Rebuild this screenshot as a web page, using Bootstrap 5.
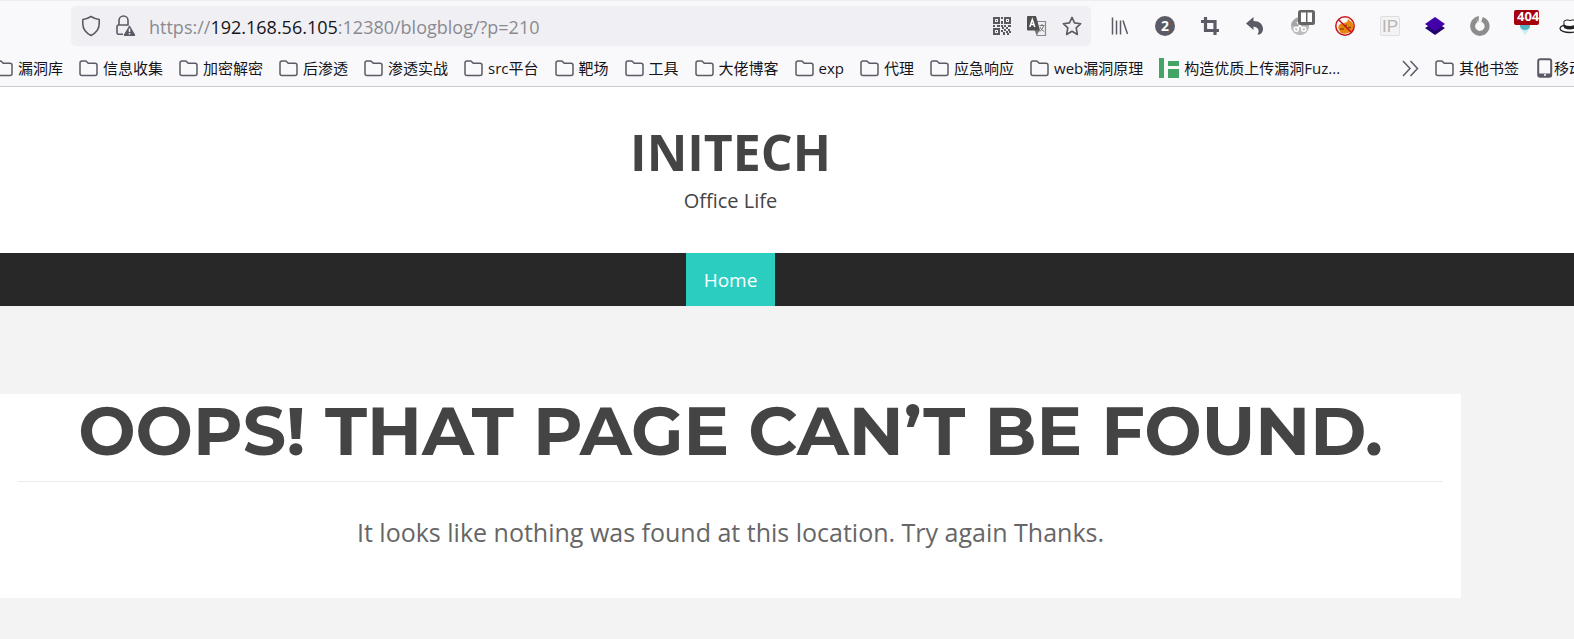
<!DOCTYPE html>
<html lang="zh-CN">
<head>
<meta charset="utf-8">
<meta name="viewport" content="width=device-width, initial-scale=1">
<title>Initech – Page not found</title>
<link href="https://cdn.jsdelivr.net/npm/bootstrap@5.3.0/dist/css/bootstrap.min.css" rel="stylesheet">
<style>
  body { background: #f3f3f3; font-family: "Open Sans", "Noto Sans CJK SC", sans-serif; color: #444; overflow-x: hidden; }
  .chrome { background: #f9f9fb; border-top: 1px solid #eeeef0; border-bottom: 1px solid #ccc; color: #15141a; overflow: hidden; }
  .chrome svg { display: block; flex: none; }
  .chrome button { background: none; border: 0; padding: 0; color: inherit; }
  .toolbar { padding: 5px 0 0 71px; }
  .urlbar { height: 40px; background: #f0f0f4; border-radius: 5px; padding: 0 9px; color: #5b5b66; }
  .url-text { font-size: 18px; line-height: 24px; padding: 1px 0 0 3px; color: #8a8a90; outline: 0; white-space: nowrap; }
  .url-host { color: #15141a; }
  .url-actions { gap: 15px; }
  .extensions { width: 483px; padding-left: 6px; color: #5b5b66; }
  .extensions button { width: 45px; height: 40px; flex: none; display: flex; align-items: center; justify-content: center; }
  .ext-badge { top: 4px; left: 12px; width: 25px; height: 15px; background: #a4000f; color: #fff; border-radius: 2px; font: bold 13px/13px "Open Sans", sans-serif; padding-left: 3px; text-align: left; overflow: hidden; }
  .pane-badge { top: 4px; left: 21px; }
  .bookmarks { height: 40px; padding-top: 4px; font-size: 15px; line-height: 20px; white-space: nowrap; }
  .bookmark-list { gap: 16px; margin-left: -6px; }
  .bookmarks button { display: flex; align-items: center; gap: 5px; flex: none; }
  .bookmarks-end { width: 172px; flex: none; }
  .site-column { margin-right: 113px; }
  .masthead { padding: 31px 0 37px; }
  .site-title { font-size: 50px; line-height: 68px; font-weight: 700; }
  .site-tagline { font-size: 20px; line-height: 30px; }
  .site-nav { background: #282828; }
  .site-nav a { background: #2bcdc1; color: #fff; font-size: 19px; line-height: 51px; padding: 2px 18px 0; }
  .not-found { margin-top: 88px; padding: 0 18px 46px; }
  .not-found h1 { font: 700 68px/73px Montserrat, "DejaVu Sans", sans-serif; padding-bottom: 14px; border-bottom: 1px solid #ebebeb; }
  .not-found p { font-size: 25px; line-height: 40px; color: #666; padding-top: 30px; }
</style>
</head>
<body>
<svg width="0" height="0" class="position-absolute" aria-hidden="true">
  <symbol id="folder" viewBox="0 0 19 17"><path d="M1 13.5V3q0-2 2-2h3.2q1 0 1.6.8L9.200 3.300H16q2 0 2 2v8.200q0 2-2 2H3q-2 0-2-2z" fill="none" stroke="#5b5b66" stroke-width="1.500"/></symbol>
</svg>

<header class="chrome">
  <div class="toolbar d-flex">
    <div class="urlbar d-flex align-items-center flex-grow-1">
      <button type="button" aria-label="Tracking protection"><svg width="22" height="22" viewBox="0 0 22 22" fill="none" stroke="currentColor" stroke-width="1.600" stroke-linejoin="round"><path d="M11 1.500 Q15 4 19.200 4.500 V9 Q19 16.500 11 20.500 Q3 16.500 2.800 9 V4.500 Q7 4 11 1.500z"/></svg></button>
      <button type="button" class="ms-2 ps-1" aria-label="Connection not secure"><svg width="24" height="22" viewBox="0 0 24 22"><path d="M9 19.200H4.500q-1.500 0-1.500-1.500V11.500q0-1.500 1.500-1.500h9.500V5.500a4.500 4.500 0 0 0-9 0V10" fill="none" stroke="currentColor" stroke-width="1.600"/><path d="M15.500 11.500L20.500 20.200H10.500z" fill="currentColor" stroke="currentColor" stroke-width="1.500" stroke-linejoin="round"/><path d="M15.500 13.500v3.500M15.500 18v1.500" stroke="#f0f0f4" stroke-width="1.500"/></svg></button>
      <div class="url-text flex-grow-1 ms-2" role="textbox" contenteditable="true" spellcheck="false" aria-label="Address">https://<span class="url-host">192.168.56.105</span>:12380/blogblog/?p=210</div>
      <div class="url-actions d-flex align-items-center flex-shrink-0">
        <button type="button" aria-label="QR code"><svg width="20" height="20" viewBox="0 0 20 20" fill="#5a5a5e"><path fill-rule="evenodd" d="M1 1h7v7H1zM3 3v3h3V3zM12 1h7v7h-7zM14 3v3h3V3zM1 12h7v7H1zM3 14v3h3v-3z"/><path d="M4 4h1v1H4zM15 4h1v1h-1zM4 15h1v1H4zM9 1h2v2H9zM9 5h2v3H9zM1 9h2v2H1zM5 9h3v2H5zM9 9h2v2H9zM12 9h2v2h-2zM16 9h3v2h-3zM10 11h2v2h-2zM14 11h2v2h-2zM12 13h2v2h-2zM16 13h2v2h-2zM9 14h2v2H9zM14 15h2v2h-2zM17 15h2v2h-2zM11 16h2v3h-2zM15 17h2v2h-2z"/></svg></button>
        <button type="button" aria-label="Translate"><svg width="20" height="20" viewBox="0 0 20 20"><path d="M9 5.500h9.500v14H10z" fill="#f0f0f4" stroke="#888" stroke-width="1.200"/><path d="M12.500 9.500h5M15 8v1.500M16.700 9.500q-.8 4-4 6M13 11q1.500 3.500 4.300 4.500" fill="none" stroke="#777"/><path d="M1 0h8l4 14.500H1q-1 0-1-1V1q0-1 1-1z" fill="#505050"/><path d="M7.500 14h5.500L9.500 19z" fill="#707070"/><path d="M2.800 11L5.300 3.500l2.500 7.500M3.700 8.500h3.200" fill="none" stroke="#fff" stroke-width="1.500"/></svg></button>
        <button type="button" aria-label="Bookmark this page"><svg width="20" height="20" viewBox="0 0 20 20"><path d="M10 1.400l2.500 5.500 6.200.8-4.500 4.200 1.200 6.600L10 15.300l-5.400 3.200 1.200-6.600L1.300 7.700l6.200-.8z" fill="none" stroke="#5b5b66" stroke-width="1.600" stroke-linejoin="round"/></svg></button>
      </div>
    </div>
    <div class="extensions d-flex flex-shrink-0">
      <button type="button" aria-label="Library"><svg width="20" height="20" viewBox="0 0 20 20"><path d="M2.500 1.500v17M6.500 4.500v14M10.500 4.500v14M13 4.500l4.500 13.500" fill="none" stroke="currentColor" stroke-width="1.500"/></svg></button>
      <button type="button"><svg width="20" height="20" viewBox="0 0 20 20" role="img" aria-label="2 containers"><circle cx="10" cy="10" r="10" fill="currentColor"/><text x="10" y="15" text-anchor="middle" font-family="Open Sans" font-size="14" font-weight="700" fill="#fff">2</text></svg></button>
      <button type="button" aria-label="Screenshot"><svg width="20" height="20" viewBox="0 0 20 20"><path d="M1 5.500h14V19M5.500 1v13.500H19" fill="none" stroke="currentColor" stroke-width="3.200"/></svg></button>
      <button type="button" aria-label="Undo"><svg width="20" height="20" viewBox="0 0 20 20"><path d="M1 7.500L8.500 1v4C14.500 5 18 8.500 18 13q0 3.500-3.500 5.500h-2Q16 12 8.500 10.500V14z" fill="currentColor"/></svg></button>
      <button type="button" class="position-relative" aria-label="User scripts"><svg width="20" height="20" viewBox="0 0 20 20"><circle cx="10" cy="10" r="9" fill="#a6a6a6"/><path d="M1 10h18a9 9 0 0 1-18 0z" fill="#bdbdbd"/><path d="M7 6l6 7M13 6l-6 7" stroke="#fff" stroke-width="1.500"/><circle cx="6.300" cy="13.300" r="2" fill="none" stroke="#fff" stroke-width="1.500"/><circle cx="13.700" cy="13.300" r="2" fill="none" stroke="#fff" stroke-width="1.500"/></svg><svg class="pane-badge position-absolute" width="17" height="15" viewBox="0 0 17 15"><rect width="17" height="15" rx="2.500" fill="#666"/><path d="M3 2.500h5v9.500H3zM9.500 2.500h4.500v9.500H9.500z" fill="#fff"/></svg></button>
      <button type="button" aria-label="Proxy disabled"><svg width="20" height="20" viewBox="0 0 20 20"><path d="M4 14q-2-3 1-6 4-1 7-2l1-3 2 2 2 1q3 5 0 9-6 4-11 2z" fill="#e8850c"/><path d="M5 13h4M9 10l3-1M13 12l3-1" stroke="#5c3209"/><circle cx="10" cy="10" r="9.200" fill="none" stroke="#c8141e" stroke-width="1.500"/><path d="M3.500 3.500l13 13" stroke="#c8141e" stroke-width="1.500"/></svg></button>
      <button type="button"><svg width="20" height="20" viewBox="0 0 20 20" role="img" aria-label="IP lookup"><rect x=".5" y=".5" width="19" height="19" rx="1.500" fill="#f3f3f3" stroke="#dedede"/><text x="10" y="16" text-anchor="middle" font-family="Liberation Sans" font-size="17" fill="#b5b5b5">IP</text></svg></button>
      <button type="button" aria-label="Layers"><svg width="20" height="20" viewBox="0 0 20 20"><path d="M0 12l10-6 10 6-10 7z" fill="#22006e"/><path d="M0 8l10-7 10 7-10 7z" fill="#4400a8"/></svg></button>
      <button type="button" aria-label="Reload status"><svg width="20" height="20" viewBox="0 0 20 20"><path d="M12 3.300A7.200 7.200 0 1 1 6.500 3.800" fill="none" stroke="#8d8d8d" stroke-width="5"/><path d="M4.500 1.500l4.500-1.500-.5 6z" fill="#8d8d8d"/></svg></button>
      <button type="button" class="position-relative"><svg width="20" height="20" viewBox="0 0 20 20" aria-hidden="true"><path d="M4 11h12l-6 8z" fill="#c9eef3"/><path d="M5 7h10v3a5 4 0 0 1-10 0z" fill="#55b3c2"/></svg><span class="ext-badge position-absolute">404</span></button>
      <button type="button" aria-label="Hat"><svg width="22" height="20" viewBox="0 0 22 20"><ellipse cx="11" cy="12.500" rx="10" ry="4" fill="#fff" stroke="#222" stroke-width="1.300"/><path d="M5 11V5q3-2 6-.5 3-1.500 6 .5v6q-6 3-12 0z" fill="#fff" stroke="#222"/><path d="M5 8.500q6 3 12 0V12q-6 3-12 0z" fill="#222"/></svg></button>
    </div>
  </div>

  <nav class="bookmarks d-flex align-items-center" aria-label="书签">
    <div class="bookmark-list d-flex flex-grow-1">
      <button type="button"><svg width="19" height="17"><use href="#folder"/></svg>漏洞库</button>
      <button type="button"><svg width="19" height="17"><use href="#folder"/></svg>信息收集</button>
      <button type="button"><svg width="19" height="17"><use href="#folder"/></svg>加密解密</button>
      <button type="button"><svg width="19" height="17"><use href="#folder"/></svg>后渗透</button>
      <button type="button"><svg width="19" height="17"><use href="#folder"/></svg>渗透实战</button>
      <button type="button"><svg width="19" height="17"><use href="#folder"/></svg>src平台</button>
      <button type="button"><svg width="19" height="17"><use href="#folder"/></svg>靶场</button>
      <button type="button"><svg width="19" height="17"><use href="#folder"/></svg>工具</button>
      <button type="button"><svg width="19" height="17"><use href="#folder"/></svg>大佬博客</button>
      <button type="button"><svg width="19" height="17"><use href="#folder"/></svg>exp</button>
      <button type="button"><svg width="19" height="17"><use href="#folder"/></svg>代理</button>
      <button type="button"><svg width="19" height="17"><use href="#folder"/></svg>应急响应</button>
      <button type="button"><svg width="19" height="17"><use href="#folder"/></svg>web漏洞原理</button>
      <button type="button"><svg width="20" height="20" viewBox="0 0 20 20"><path d="M0 0h5v20H0zM9 3h11v5H9zM9 11h11v9H9z" fill="#42a566"/></svg>构造优质上传漏洞Fuz...</button>
    </div>
    <div class="bookmarks-end d-flex align-items-center overflow-hidden">
      <button type="button" aria-label="更多书签"><svg width="17" height="17" viewBox="0 0 17 17"><path d="M1 1l7 7.500L1 16M8.500 1l7 7.500-7 7.500" fill="none" stroke="#5b5b66" stroke-width="1.500"/></svg></button>
      <button type="button" class="ms-3"><svg width="19" height="17"><use href="#folder"/></svg>其他书签</button>
      <button type="button" class="ms-3 gap-0"><svg width="19" height="20" viewBox="0 0 19 20"><rect x="3.200" y="1.200" width="13" height="17.600" rx="2" fill="none" stroke="#5b5b66" stroke-width="2"/><path d="M3 15.500h13.500v3.500H3z" fill="#5b5b66"/><path d="M9 17h2" stroke="#fff" stroke-width="1.500"/></svg>移动设备上的书签</button>
    </div>
  </nav>
</header>

<div class="bg-white">
  <div class="masthead site-column text-center">
    <div class="site-title">INITECH</div>
    <div class="site-tagline">Office Life</div>
  </div>
</div>
<nav class="site-nav" aria-label="Main">
  <div class="site-column d-flex justify-content-center">
    <a href="#" class="text-decoration-none">Home</a>
  </div>
</nav>
<main class="site-column">
  <section class="not-found bg-white text-center">
    <h1 class="text-uppercase text-nowrap mb-0">Oops! That page can’t be found.</h1>
    <p class="mb-0">It looks like nothing was found at this location. Try again Thanks.</p>
  </section>
</main>

<script src="https://cdn.jsdelivr.net/npm/bootstrap@5.3.0/dist/js/bootstrap.bundle.min.js"></script>
</body>
</html>
